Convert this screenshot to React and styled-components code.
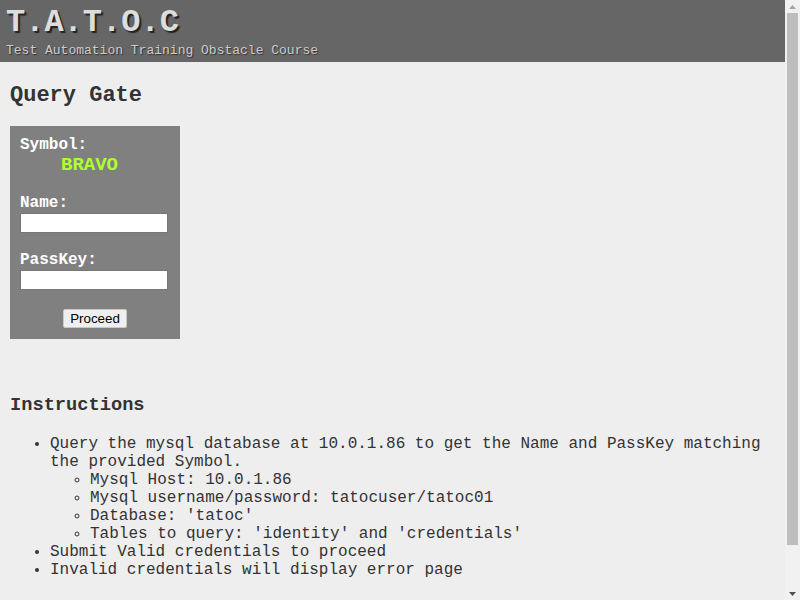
import React from "react";
import styled, { createGlobalStyle } from "styled-components";

const GlobalStyle = createGlobalStyle`
html, body {
  margin: 0;
  padding: 0;
  background: #eeeeee;
  font-family: "Liberation Mono", "Courier New", monospace;
  color: #333333;
}
`;

const Window = styled.div`
display: flex;
flex-direction: row;
height: 100vh;
overflow: hidden;
`;

const Viewport = styled.div`
flex: 1;
min-width: 0;
overflow: hidden;
`;

const ScrollRail = styled.div`
width: 15px;
flex-shrink: 0;
background: #f1f1f1;
display: flex;
flex-direction: column;
align-items: center;
`;

const RailArrow = styled.div`
height: 13px;
width: 15px;
display: flex;
align-items: center;
justify-content: center;
flex-shrink: 0;
`;

const RailTrack = styled.div`
flex: 1;
width: 11px;
display: flex;
flex-direction: column;
padding-bottom: 42px;
`;

const Thumb = styled.div`
flex: 1;
background: #bdbdbd;
`;

const Header = styled.div`
background: #666666;
height: 62px;
padding: 6px 6px 0;
box-sizing: border-box;
`;

const Title = styled.div`
font-size: 32px;
font-weight: bold;
line-height: 34px;
color: #dddddd;
text-shadow: 2px 2px 1px #222222;
`;

const SubTitle = styled.div`
font-size: 13px;
line-height: 16px;
margin-top: 3px;
color: #cccccc;
text-shadow: 1px 1px 1px #333333;
`;

const Page = styled.div`
padding: 0 10px;
`;

const PageTitle = styled.h1`
font-size: 22px;
margin: 22px 0 18px;
line-height: 24px;
`;

const GateBox = styled.form`
width: 170px;
height: 213px;
box-sizing: border-box;
background: #808080;
padding: 10px 10px 10px;
display: flex;
flex-direction: column;
`;

const Label = styled.label`
font-size: 16px;
font-weight: bold;
color: #ffffff;
line-height: 18px;
margin-top: ${props => props.gap || 0}px;
`;

const Symbol = styled.div`
font-size: 19px;
font-weight: bold;
color: #adff2f;
line-height: 22px;
padding-left: 41px;
`;

const Field = styled.input`
width: 148px;
height: 20px;
box-sizing: border-box;
margin: 1px 0 0;
border: 1px solid #767676;
background: #ffffff;
`;

const Proceed = styled.button`
align-self: center;
margin-top: 19px;
height: 19px;
width: 64px;
padding: 0;
font-family: "Liberation Sans", Arial, sans-serif;
font-size: 13.33px;
color: #000000;
background: #efefef;
border: 1px solid #c8c8c8;
border-radius: 2px;
`;

const Section = styled.h2`
font-size: 18.7px;
line-height: 22px;
margin: 55px 0 19px;
`;

const List = styled.ul`
margin: 0;
padding-left: 40px;
font-size: 16px;
line-height: 18px;
list-style-type: ${props => props.nested ? "circle" : "disc"};
`;

export default function App() {
    return (
        <>
            <GlobalStyle />
            <Window>
                <Viewport>
                    <Header>
                        <Title>T.A.T.O.C</Title>
                        <SubTitle>Test Automation Training Obstacle Course</SubTitle>
                    </Header>
                    <Page>
                        <PageTitle>Query Gate</PageTitle>
                        <GateBox onSubmit={e => e.preventDefault()}>
                            <Label>Symbol:</Label>
                            <Symbol>BRAVO</Symbol>
                            <Label gap={18}>Name:</Label>
                            <Field type="text" />
                            <Label gap={18}>PassKey:</Label>
                            <Field type="password" />
                            <Proceed type="button">Proceed</Proceed>
                        </GateBox>
                        <Section>Instructions</Section>
                        <List>
                            <li>Query the mysql database at 10.0.1.86 to get the Name and PassKey matching the provided Symbol.
                                <List nested>
                                    <li>Mysql Host: 10.0.1.86</li>
                                    <li>Mysql username/password: tatocuser/tatoc01</li>
                                    <li>Database: 'tatoc'</li>
                                    <li>Tables to query: 'identity' and 'credentials'</li>
                                </List>
                            </li>
                            <li>Submit Valid credentials to proceed</li>
                            <li>Invalid credentials will display error page</li>
                        </List>
                    </Page>
                </Viewport>
                <ScrollRail>
                    <RailArrow>
                        <svg width="7" height="4" viewBox="0 0 7 4"><path d="M0 4h7L3.5 0z" fill="#a3a3a3" /></svg>
                    </RailArrow>
                    <RailTrack><Thumb /></RailTrack>
                    <RailArrow>
                        <svg width="7" height="4" viewBox="0 0 7 4"><path d="M0 0h7L3.5 4z" fill="#505050" /></svg>
                    </RailArrow>
                </ScrollRail>
            </Window>
        </>
    );
}
